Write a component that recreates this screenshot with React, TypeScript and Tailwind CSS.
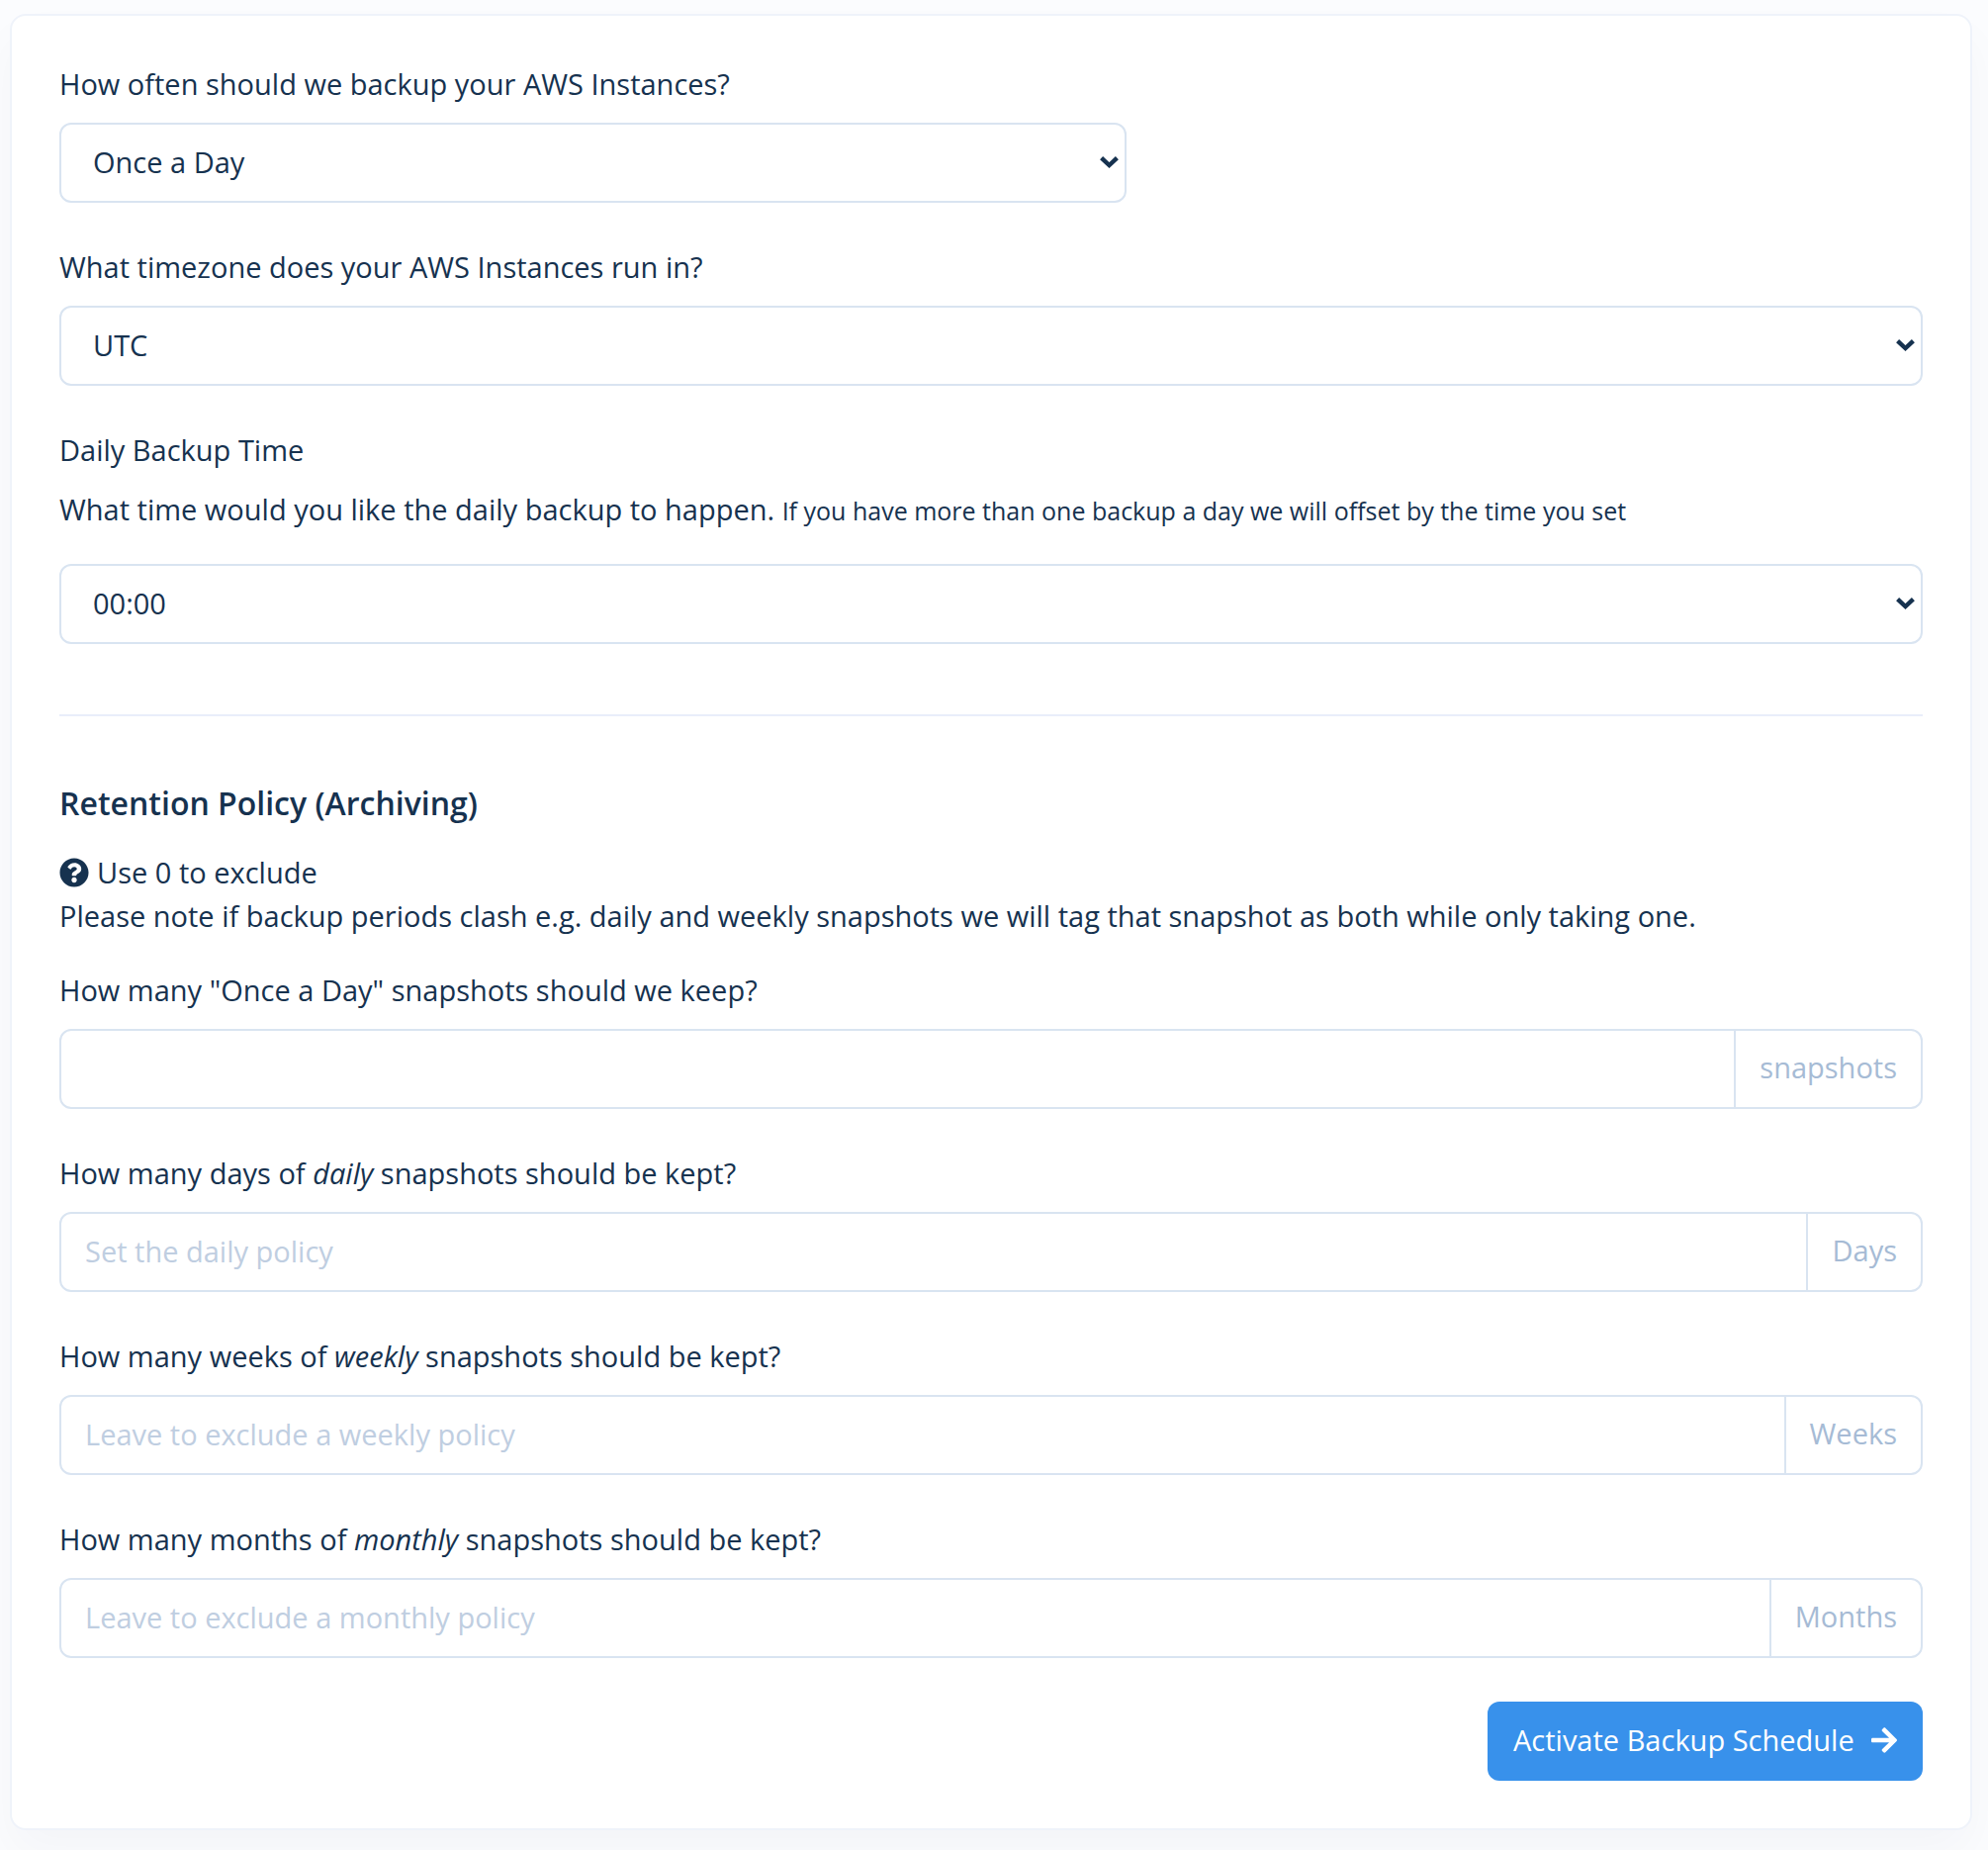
import type { ReactNode } from 'react'
import { FaArrowRight, FaQuestionCircle } from 'react-icons/fa'

const hours = Array.from({ length: 24 }, (_, i) => `${String(i).padStart(2, '0')}:00`)

const policies = [
  { id: 'daily', period: 'days', unit: 'Days', placeholder: 'Set the daily policy' },
  { id: 'weekly', period: 'weeks', unit: 'Weeks', placeholder: 'Leave to exclude a weekly policy' },
  { id: 'monthly', period: 'months', unit: 'Months', placeholder: 'Leave to exclude a monthly policy' },
]

function SelectBox({ id, options }: { id: string; options: string[] }) {
  return (
    <div className="relative">
      <select
        id={id}
        className="block w-full h-[81px] pl-8 pr-12 pb-0.5 appearance-none bg-white border-2 border-[#d9e4f1] rounded-xl"
      >
        {options.map((option) => (
          <option key={option}>{option}</option>
        ))}
      </select>
      <svg
        className="absolute right-2 top-[34px] w-[19px] h-3 pointer-events-none"
        viewBox="0 0 19 12"
        fill="none"
        stroke="currentColor"
        strokeWidth="4.4"
      >
        <path d="M1.6 1.6L9.5 9L17.4 1.6" />
      </svg>
    </div>
  )
}

function Field({ id, label, children }: { id: string; label: ReactNode; children: ReactNode }) {
  return (
    <div className="mb-[43px]">
      <label htmlFor={id} className="block mb-[17px]">
        {label}
      </label>
      {children}
    </div>
  )
}

function UnitInput({ id, unit, placeholder }: { id: string; unit: string; placeholder?: string }) {
  return (
    <div className="flex h-[81px] border-2 border-[#d9e4f1] rounded-xl">
      <input
        id={id}
        type="text"
        placeholder={placeholder}
        className="flex-1 min-w-0 px-6 pb-0.5 bg-transparent outline-none placeholder:text-[#bfcee1]"
      />
      <span className="flex items-center px-6 pb-1 border-l-2 border-[#d9e4f1] text-[#a6bbd5]">{unit}</span>
    </div>
  )
}

export default function App() {
  return (
    <main className="min-h-screen bg-[#fbfcfe] pt-[14px] pr-4 pb-5 pl-[10px] font-['Open_Sans',sans-serif] font-medium text-[29px] leading-[44px] text-[#16324f]">
      <form className="bg-white border-2 border-[#eff3fa] rounded-2xl shadow-[0_24px_48px_rgba(18,38,63,0.03)] px-12 pt-[47px] pb-12">
        {/* Schedule */}
        <div className="grid grid-cols-12 gap-x-12">
          <div className="col-span-7">
            <Field id="frequency" label="How often should we backup your AWS Instances?">
              <SelectBox id="frequency" options={['Once a Day', 'Twice a Day', 'Once a Week']} />
            </Field>
          </div>
        </div>

        <Field id="timezone" label="What timezone does your AWS Instances run in?">
          <SelectBox id="timezone" options={['UTC', 'Europe/London', 'America/New_York']} />
        </Field>

        <label htmlFor="time" className="block mb-4">
          Daily Backup Time
        </label>
        <p className="mb-8">
          What time would you like the daily backup to happen.{' '}
          <small className="text-[25px]">If you have more than one backup a day we will offset by the time you set</small>
        </p>
        <SelectBox id="time" options={hours} />

        <hr className="mt-[71px] mb-[68px] border-t-2 border-[#e9eefa]" />

        {/* Retention */}
        <h2 className="mb-7 text-[32px] leading-10 font-semibold">Retention Policy (Archiving)</h2>
        <div className="flex items-center gap-2">
          <FaQuestionCircle className="w-[30px] h-[30px]" />
          <span>Use 0 to exclude</span>
        </div>
        <p className="mb-[31px]">
          Please note if backup periods clash e.g. daily and weekly snapshots we will tag that snapshot as both while
          only taking one.
        </p>

        <Field id="snapshots" label={'How many "Once a Day" snapshots should we keep?'}>
          <UnitInput id="snapshots" unit="snapshots" />
        </Field>

        {policies.map((policy) => (
          <Field
            key={policy.id}
            id={policy.id}
            label={
              <>
                How many {policy.period} of <em>{policy.id}</em> snapshots should be kept?
              </>
            }
          >
            <UnitInput id={policy.id} unit={policy.unit} placeholder={policy.placeholder} />
          </Field>
        ))}

        <div className="flex justify-end pt-px">
          <button
            type="button"
            className="flex items-center justify-between gap-2 min-w-[440px] h-20 px-[26px] pb-0.5 bg-[#3891eb] text-white rounded-xl"
          >
            Activate Backup Schedule
            <FaArrowRight className="w-[26px] h-[30px]" />
          </button>
        </div>
      </form>
    </main>
  )
}
